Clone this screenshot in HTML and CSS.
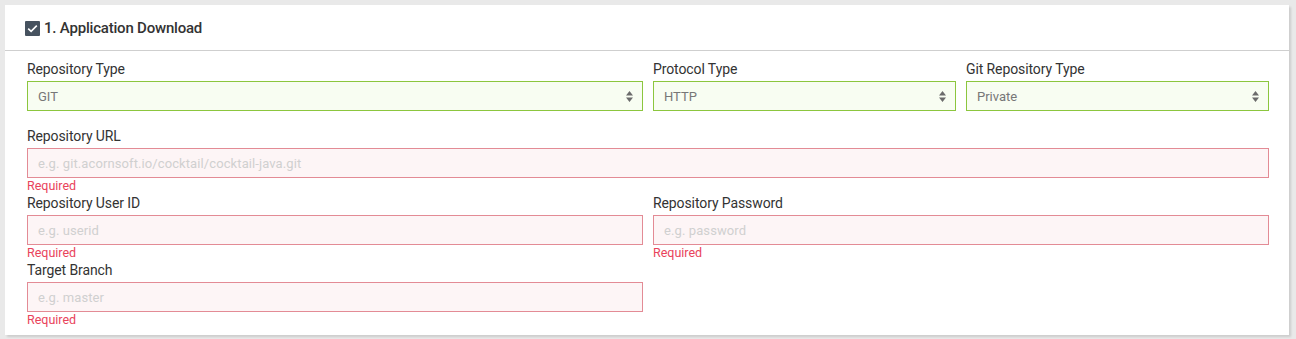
FILE: index.html
```html
<!DOCTYPE html>
<html lang="en">
<head>
  <meta charset="UTF-8">
  <title>Application Download</title>
  <link rel="stylesheet" href="styles.css">
</head>
<body>
  <div class="card">
    <div class="card-header">
      <span class="check">
        <svg width="15" height="15" viewBox="0 0 15 15"><path d="M3.2 7.6 L6.1 10.4 L11.8 4.6" fill="none" stroke="#fff" stroke-width="1.6"/></svg>
      </span>
      <h2>1. Application Download</h2>
    </div>
    <div class="card-body">
      <div class="field span-2">
        <label>Repository Type</label>
        <div class="select">GIT
          <svg class="arrows" width="7" height="11" viewBox="0 0 7 11"><path d="M3.5 0 L7 4.5 H0 Z M0 6.5 H7 L3.5 11 Z" fill="#6b6b6b"/></svg>
        </div>
        <div class="help"></div>
      </div>
      <div class="field">
        <label>Protocol Type</label>
        <div class="select">HTTP
          <svg class="arrows" width="7" height="11" viewBox="0 0 7 11"><path d="M3.5 0 L7 4.5 H0 Z M0 6.5 H7 L3.5 11 Z" fill="#6b6b6b"/></svg>
        </div>
        <div class="help"></div>
      </div>
      <div class="field">
        <label>Git Repository Type</label>
        <div class="select">Private
          <svg class="arrows" width="7" height="11" viewBox="0 0 7 11"><path d="M3.5 0 L7 4.5 H0 Z M0 6.5 H7 L3.5 11 Z" fill="#6b6b6b"/></svg>
        </div>
        <div class="help"></div>
      </div>

      <div class="field span-4">
        <label>Repository URL</label>
        <input type="text" class="invalid" placeholder="e.g. git.acornsoft.io/cocktail/cocktail-java.git">
        <div class="help">Required</div>
      </div>

      <div class="field span-2">
        <label>Repository User ID</label>
        <input type="text" class="invalid" placeholder="e.g. userid">
        <div class="help">Required</div>
      </div>
      <div class="field span-2">
        <label>Repository Password</label>
        <input type="password" class="invalid" placeholder="e.g. password">
        <div class="help">Required</div>
      </div>

      <div class="field span-2">
        <label>Target Branch</label>
        <input type="text" class="invalid" placeholder="e.g. master">
        <div class="help">Required</div>
      </div>
    </div>
  </div>
</body>
</html>
```

FILE: styles.css
```css
body {
  margin: 0;
  padding: 5px 7px 5px 5px;
  background-color: #e9e9e9;
  font-family: Roboto, 'Liberation Sans', sans-serif;
  color: #333333;
}
.card {
  background-color: #ffffff;
  box-shadow: 2px 2px 2px rgba(0, 0, 0, 0.12);
}
.card-header {
  height: 46px;
  box-sizing: border-box;
  padding: 0 20px;
  display: flex;
  align-items: center;
  border-bottom: 1px solid #cfcfcf;
}
.check {
  width: 15px;
  height: 15px;
  background-color: #46525f;
  border-radius: 1px;
  display: flex;
  margin-right: 4px;
  margin-top: 1px;
}
.card-header h2 {
  margin: 0;
  font-size: 15px;
  font-weight: 500;
  color: #333333;
  letter-spacing: -0.2px;
}
.card-body {
  padding: 9px 20px 7px 22px;
  display: grid;
  grid-template-columns: repeat(4, 1fr);
  column-gap: 10px;
}
.field {
  display: flex;
  flex-direction: column;
}
.span-2 {
  grid-column: span 2;
}
.span-4 {
  grid-column: span 4;
}
.field label {
  font-size: 14px;
  line-height: 18px;
  margin-bottom: 3px;
  color: #333333;
  letter-spacing: -0.1px;
}
.select,
.field input {
  height: 30px;
  box-sizing: border-box;
  padding: 0 10px;
  font-family: Roboto, 'Liberation Sans', sans-serif;
  font-size: 13px;
  margin: 0;
  outline: none;
}
.select {
  display: flex;
  align-items: center;
  justify-content: space-between;
  background-color: #f8fdf2;
  border: 1px solid #8cc63e;
  color: #777777;
  padding-right: 9px;
}
.field input.invalid {
  background-color: #fdf5f6;
  border: 1px solid #e38b95;
  color: #333333;
}
.field input::placeholder {
  color: #d0d0d0;
  letter-spacing: 0.1px;
}
.help {
  height: 16px;
  font-size: 12.5px;
  line-height: 16px;
  color: #e9435b;
}
```
